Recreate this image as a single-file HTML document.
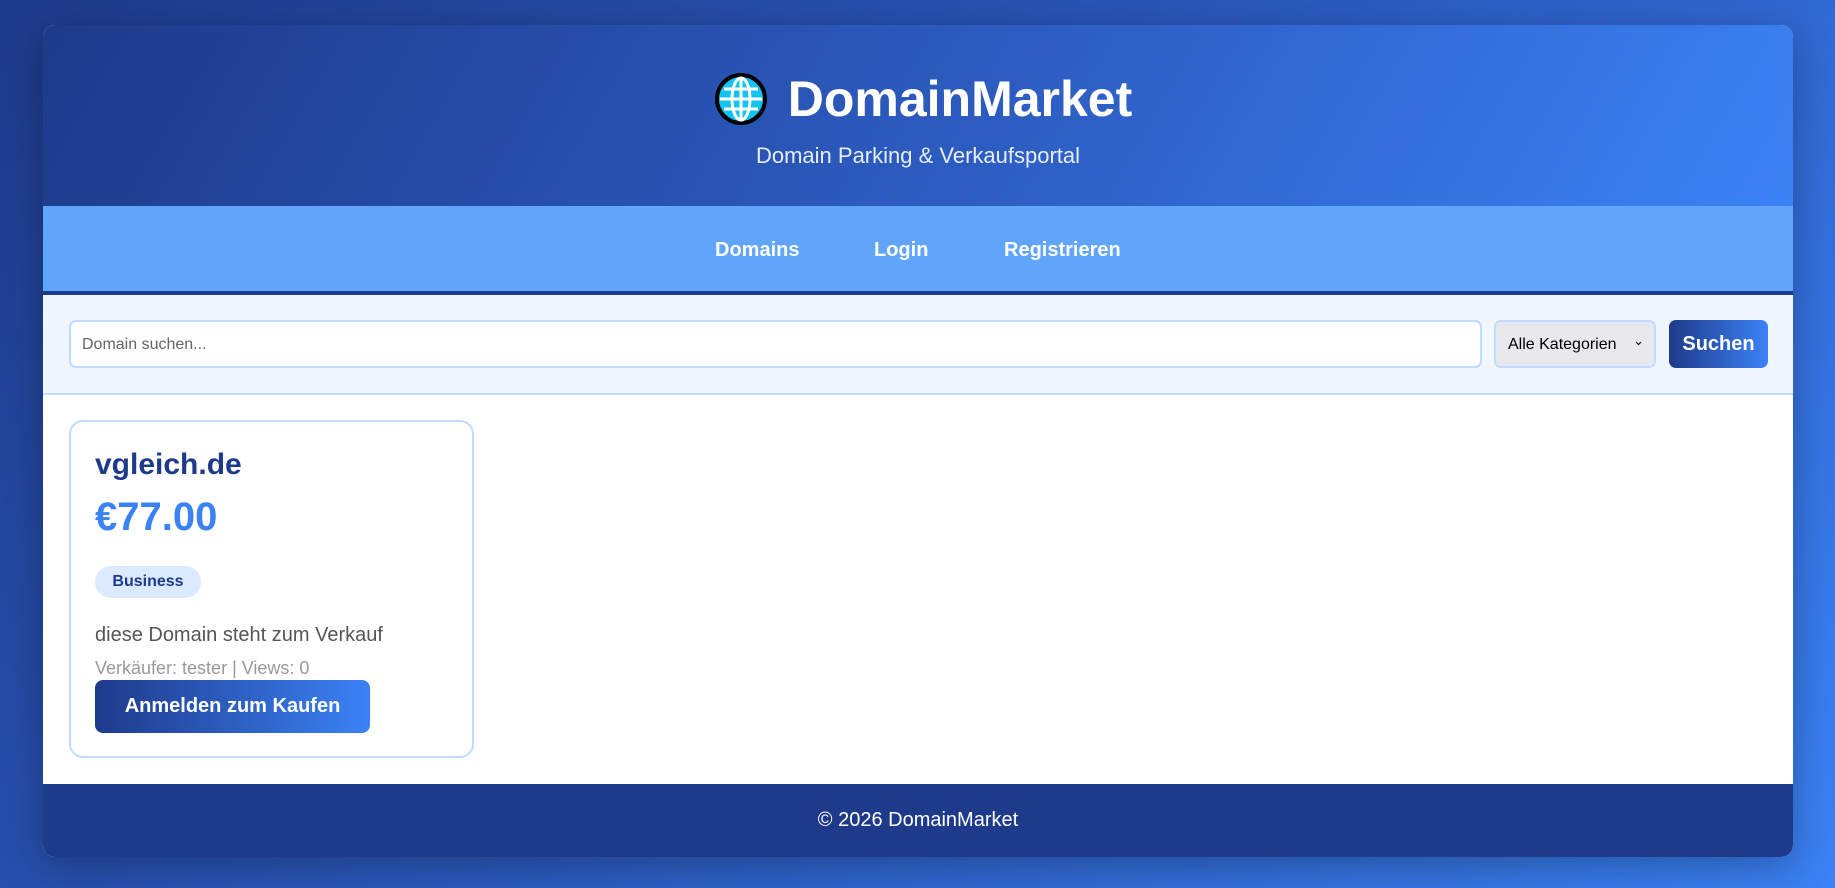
<!DOCTYPE html>
<html><head><meta charset="utf-8"><style>
*{box-sizing:border-box;margin:0;padding:0}
body{width:1835px;height:888px;overflow:hidden;font-family:"Liberation Sans",Arial,sans-serif;background:linear-gradient(135deg,#1e3a8a 0%,#2b5bc0 50%,#3b82f6 100%);position:relative}
.c{position:absolute;left:43px;top:25px;width:1750px;height:832px;border-radius:12px;overflow:hidden;background:#fff;box-shadow:0 10px 40px rgba(0,0,0,.3)}
.hd{height:181px;background:linear-gradient(120deg,#1e3a8a 0%,#2d5dc2 55%,#3b82f6 100%);color:#fff;text-align:center;position:relative}
.t{position:absolute;left:18px;right:0;top:45px;font-size:50px;font-weight:bold;display:flex;justify-content:center;align-items:center;gap:20px}
.t svg{margin-left:-8px}
.st{position:absolute;left:0;right:0;top:141px;font-size:22px;color:#e6eeff;top:118px}
.nav{height:89px;background:#60a5fa;border-bottom:4px solid #1e3a8a;position:relative}
.nav a{position:absolute;top:33px;color:#fff;font-weight:bold;font-size:20px;text-decoration:none}
.sr{height:100px;background:#eff6ff;border-bottom:2px solid #bfdbfe;position:relative}
.in{position:absolute;left:26px;top:25px;width:1413px;height:48px;border:2px solid #bfdbfe;border-radius:7px;background:#fff;font-size:16px;color:#666;padding:14px 11px}
.sel{position:absolute;left:1451px;top:25px;width:162px;height:48px;border:2px solid #bfdbfe;border-radius:7px;background:#e9e9ed;font-size:16px;color:#000;padding:14px 12px}
.sel span{position:absolute;right:10px;top:11px;font-size:13px}
.btn{position:absolute;left:1626px;top:25px;width:99px;height:48px;border-radius:7px;background:linear-gradient(90deg,#1e3a8a,#3b82f6);color:#fff;font-weight:bold;font-size:20px;text-align:center;line-height:48px}
.card{position:absolute;left:26px;top:395px;width:405px;height:338px;border:2px solid #bfdbfe;border-radius:14px}
.d{position:absolute;left:24px;top:26px;font-size:30px;font-weight:bold;color:#1e3a8a}
.p{position:absolute;left:24px;top:73px;font-size:40px;font-weight:bold;color:#3b82f6}
.b{position:absolute;left:24px;top:144px;width:106px;height:32px;border-radius:16px;background:#dbeafe;color:#1e3a8a;font-weight:bold;font-size:16px;text-align:center;line-height:32px}
.ds{position:absolute;left:24px;top:202px;font-size:20px;color:#555}
.m{position:absolute;left:24px;top:236px;font-size:18px;color:#999}
.kb{position:absolute;left:24px;top:258px;width:275px;height:53px;border-radius:8px;background:linear-gradient(90deg,#1e3a8a,#3b82f6);color:#fff;font-weight:bold;font-size:20px;text-align:center;line-height:53px}
.ft{position:absolute;left:0;right:0;bottom:0;height:73px;background:#1e3a8a;color:#fff;text-align:center;font-size:20px;line-height:72px}
</style></head><body>
<div class="c">
<div class="hd">
<div class="t"><svg width="54" height="54" viewBox="0 0 54 54"><circle cx="27" cy="27" r="24" fill="#14c3f0" stroke="#000" stroke-width="4"/><g stroke="#fff" stroke-width="3" fill="none"><ellipse cx="27" cy="27" rx="9" ry="21"/><line x1="27" y1="6" x2="27" y2="48"/><line x1="6" y1="27" x2="48" y2="27"/><line x1="10" y1="17" x2="44" y2="17"/><line x1="10" y1="37" x2="44" y2="37"/></g></svg><span>DomainMarket</span></div>
<div class="st">Domain Parking &amp; Verkaufsportal</div>
</div>
<div class="nav"><a style="left:672px">Domains</a><a style="left:831px">Login</a><a style="left:961px">Registrieren</a></div>
<div class="sr"><div class="in">Domain suchen...</div><div class="sel">Alle Kategorien<span>&#8964;</span></div><div class="btn">Suchen</div></div>
<div class="card">
<div class="d">vgleich.de</div>
<div class="p">€77.00</div>
<div class="b">Business</div>
<div class="ds">diese Domain steht zum Verkauf</div>
<div class="m">Verkäufer: tester | Views: 0</div>
<div class="kb">Anmelden zum Kaufen</div>
</div>
<div class="ft">© 2026 DomainMarket</div>
</div>
</body></html>
